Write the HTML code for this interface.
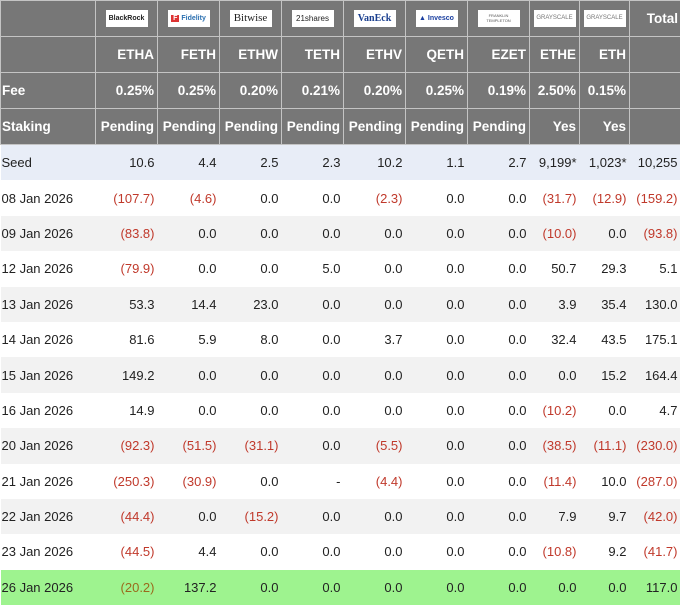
<!DOCTYPE html>
<html><head><style>
body{margin:0;width:680px;height:606px;overflow:hidden;background:#fff;font-family:"Liberation Sans",Arial,sans-serif;}
table{border-collapse:collapse;table-layout:fixed;width:680px;}
td{padding:0 3px 0 2px;text-align:right;font-size:13px;color:#222;white-space:nowrap;overflow:hidden;height:35.4px;}
tr.h td{background:#777;color:#fff;font-weight:bold;border:1px solid #c4c4c4;height:35px;font-size:13.5px;}
tr.h td:first-child{text-align:left;padding-left:1px;}
td:first-child{text-align:left;padding-left:1px;}
tr.s td{background:#e8edf7;}
tr.g td{background:#f2f2f2;}
tr.gr td{background:#9ef38f;}
.r{color:#c0392b;}
.o{color:#9a6a1c;}
.logo{display:inline-block;background:#fff;width:50px;height:17px;line-height:17px;font-size:7px;color:#222;text-align:center;font-weight:bold;vertical-align:middle;overflow:hidden;}
tr.l td{text-align:center;padding:0;}
</style></head><body>
<table>
<colgroup><col style="width:95px"><col style="width:62px"><col style="width:62px"><col style="width:62px"><col style="width:62px"><col style="width:62px"><col style="width:62px"><col style="width:62px"><col style="width:50px"><col style="width:50px"><col style="width:51px"></colgroup>
<tr class="h l"><td></td>
<td><span class="logo" style="width:42px">BlackRock</span></td>
<td><span class="logo" style="width:42px;color:#2a6fb0"><b style="background:#d33;color:#fff;padding:0 2px">F</b> Fidelity</span></td>
<td><span class="logo" style="width:42px;font-family:'Liberation Serif',serif;font-size:11px;font-weight:normal">Bitwise</span></td>
<td><span class="logo" style="width:42px;font-weight:normal;font-size:8px">21shares</span></td>
<td><span class="logo" style="width:42px;color:#1a3f8f;font-family:'Liberation Serif',serif;font-size:10px">VanEck</span></td>
<td><span class="logo" style="width:42px;color:#1a3fa0">▲ Invesco</span></td>
<td><span class="logo" style="width:42px;font-size:4px;line-height:5px;padding-top:3px;height:14px;font-weight:normal;color:#555">FRANKLIN<br>TEMPLETON</span></td>
<td><span class="logo" style="width:42px;font-size:6px;font-weight:normal;color:#777">GRAYSCALE</span></td>
<td><span class="logo" style="width:42px;font-size:6px;font-weight:normal;color:#777">GRAYSCALE</span></td>
<td style="text-align:right;padding-right:2px">Total</td></tr>
<tr class="h"><td></td><td>ETHA</td><td>FETH</td><td>ETHW</td><td>TETH</td><td>ETHV</td><td>QETH</td><td>EZET</td><td>ETHE</td><td>ETH</td><td></td></tr>
<tr class="h"><td>Fee</td><td>0.25%</td><td>0.25%</td><td>0.20%</td><td>0.21%</td><td>0.20%</td><td>0.25%</td><td>0.19%</td><td>2.50%</td><td>0.15%</td><td></td></tr>
<tr class="h"><td>Staking</td><td>Pending</td><td>Pending</td><td>Pending</td><td>Pending</td><td>Pending</td><td>Pending</td><td>Pending</td><td>Yes</td><td>Yes</td><td></td></tr>
<tr class="s"><td>Seed</td><td>10.6</td><td>4.4</td><td>2.5</td><td>2.3</td><td>10.2</td><td>1.1</td><td>2.7</td><td>9,199*</td><td>1,023*</td><td>10,255</td></tr>
<tr><td>08 Jan 2026</td><td class="r">(107.7)</td><td class="r">(4.6)</td><td>0.0</td><td>0.0</td><td class="r">(2.3)</td><td>0.0</td><td>0.0</td><td class="r">(31.7)</td><td class="r">(12.9)</td><td class="r">(159.2)</td></tr>
<tr class="g"><td>09 Jan 2026</td><td class="r">(83.8)</td><td>0.0</td><td>0.0</td><td>0.0</td><td>0.0</td><td>0.0</td><td>0.0</td><td class="r">(10.0)</td><td>0.0</td><td class="r">(93.8)</td></tr>
<tr><td>12 Jan 2026</td><td class="r">(79.9)</td><td>0.0</td><td>0.0</td><td>5.0</td><td>0.0</td><td>0.0</td><td>0.0</td><td>50.7</td><td>29.3</td><td>5.1</td></tr>
<tr class="g"><td>13 Jan 2026</td><td>53.3</td><td>14.4</td><td>23.0</td><td>0.0</td><td>0.0</td><td>0.0</td><td>0.0</td><td>3.9</td><td>35.4</td><td>130.0</td></tr>
<tr><td>14 Jan 2026</td><td>81.6</td><td>5.9</td><td>8.0</td><td>0.0</td><td>3.7</td><td>0.0</td><td>0.0</td><td>32.4</td><td>43.5</td><td>175.1</td></tr>
<tr class="g"><td>15 Jan 2026</td><td>149.2</td><td>0.0</td><td>0.0</td><td>0.0</td><td>0.0</td><td>0.0</td><td>0.0</td><td>0.0</td><td>15.2</td><td>164.4</td></tr>
<tr><td>16 Jan 2026</td><td>14.9</td><td>0.0</td><td>0.0</td><td>0.0</td><td>0.0</td><td>0.0</td><td>0.0</td><td class="r">(10.2)</td><td>0.0</td><td>4.7</td></tr>
<tr class="g"><td>20 Jan 2026</td><td class="r">(92.3)</td><td class="r">(51.5)</td><td class="r">(31.1)</td><td>0.0</td><td class="r">(5.5)</td><td>0.0</td><td>0.0</td><td class="r">(38.5)</td><td class="r">(11.1)</td><td class="r">(230.0)</td></tr>
<tr><td>21 Jan 2026</td><td class="r">(250.3)</td><td class="r">(30.9)</td><td>0.0</td><td>-</td><td class="r">(4.4)</td><td>0.0</td><td>0.0</td><td class="r">(11.4)</td><td>10.0</td><td class="r">(287.0)</td></tr>
<tr class="g"><td>22 Jan 2026</td><td class="r">(44.4)</td><td>0.0</td><td class="r">(15.2)</td><td>0.0</td><td>0.0</td><td>0.0</td><td>0.0</td><td>7.9</td><td>9.7</td><td class="r">(42.0)</td></tr>
<tr><td>23 Jan 2026</td><td class="r">(44.5)</td><td>4.4</td><td>0.0</td><td>0.0</td><td>0.0</td><td>0.0</td><td>0.0</td><td class="r">(10.8)</td><td>9.2</td><td class="r">(41.7)</td></tr>
<tr class="gr"><td>26 Jan 2026</td><td class="o">(20.2)</td><td>137.2</td><td>0.0</td><td>0.0</td><td>0.0</td><td>0.0</td><td>0.0</td><td>0.0</td><td>0.0</td><td>117.0</td></tr>
</table>
</body></html>
